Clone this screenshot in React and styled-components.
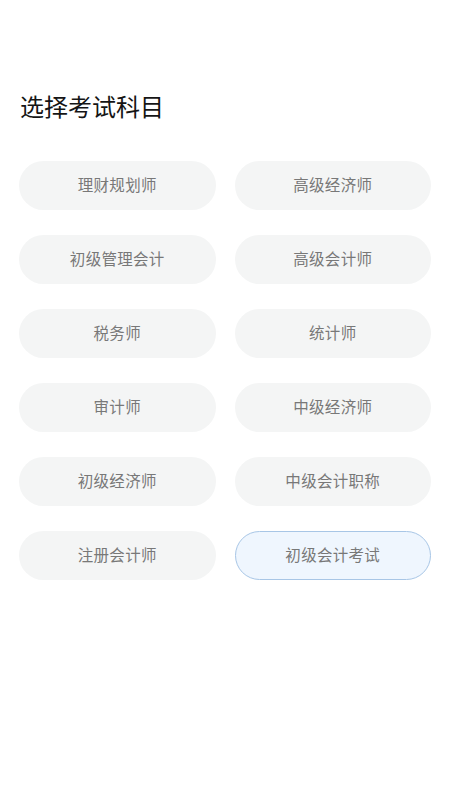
import styled, { createGlobalStyle } from "styled-components";
import { useState } from "react";

const GlobalStyle = createGlobalStyle`
  body {
    margin: 0;
    background: #fff;
    font-family: "Noto Sans CJK SC", "Noto Sans", sans-serif;
  }
`;

const Page = styled.div`
  padding: 89px 19px 0;
`;

const Title = styled.h1`
  margin: 0 0 38px 1px;
  font-size: 24px;
  line-height: 34px;
  font-weight: 400;
  color: #151515;
  letter-spacing: 0;
`;

const Grid = styled.div`
  display: grid;
  grid-template-columns: 1fr 1fr;
  column-gap: 19px;
  row-gap: 25px;
`;

const Option = styled.button`
  height: 49px;
  border-radius: 25px;
  border: 1px solid ${(p) => (p.$active ? "#a8c6e6" : "transparent")};
  background: ${(p) => (p.$active ? "#eff6fe" : "#f4f5f5")};
  color: #787878;
  font-family: inherit;
  font-size: 15.5px;
  letter-spacing: 0.3px;
  cursor: pointer;
  padding: 0 0 3px;
  outline: none;
`;

const subjects = [
  "理财规划师",
  "高级经济师",
  "初级管理会计",
  "高级会计师",
  "税务师",
  "统计师",
  "审计师",
  "中级经济师",
  "初级经济师",
  "中级会计职称",
  "注册会计师",
  "初级会计考试",
];

export default function App() {
  const [selected, setSelected] = useState("初级会计考试");

  return (
    <>
      <GlobalStyle />
      <Page>
        <Title>选择考试科目</Title>
        <Grid>
          {subjects.map((s) => (
            <Option key={s} $active={s === selected} onClick={() => setSelected(s)}>
              {s}
            </Option>
          ))}
        </Grid>
      </Page>
    </>
  );
}
